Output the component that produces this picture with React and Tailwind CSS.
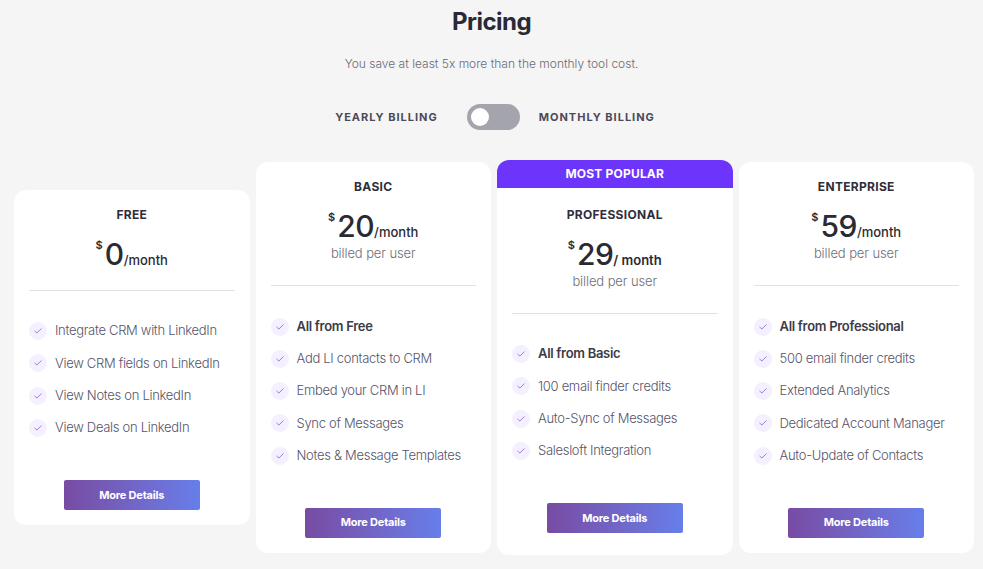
import React from "react";

const plans = [
  {
    name: "FREE",
    price: "0",
    per: "/month",
    billed: false,
    features: [
      ["Integrate CRM with LinkedIn", false],
      ["View CRM fields on LinkedIn", false],
      ["View Notes on LinkedIn", false],
      ["View Deals on LinkedIn", false],
    ],
  },
  {
    name: "BASIC",
    price: "20",
    per: "/month",
    billed: true,
    features: [
      ["All from Free", true],
      ["Add LI contacts to CRM", false],
      ["Embed your CRM in LI", false],
      ["Sync of Messages", false],
      ["Notes & Message Templates", false],
    ],
  },
  {
    name: "PROFESSIONAL",
    price: "29",
    per: "/ month",
    billed: true,
    popular: true,
    features: [
      ["All from Basic", true],
      ["100 email finder credits", false],
      ["Auto-Sync of Messages", false],
      ["Salesloft Integration", false],
    ],
  },
  {
    name: "ENTERPRISE",
    price: "59",
    per: "/month",
    billed: true,
    features: [
      ["All from Professional", true],
      ["500 email finder credits", false],
      ["Extended Analytics", false],
      ["Dedicated Account Manager", false],
      ["Auto-Update of Contacts", false],
    ],
  },
];

function Check() {
  return (
    <span className="flex h-[18px] w-[18px] shrink-0 items-center justify-center rounded-full bg-[#f4f0fe]">
      <svg width="8" height="6" viewBox="0 0 8 6" fill="none">
        <path d="M0.8 3.2 L2.9 5 L7.2 0.8" stroke="#9b7bf0" strokeWidth="1" strokeLinecap="round" strokeLinejoin="round" />
      </svg>
    </span>
  );
}

function Card({ plan }) {
  return (
    <div className="flex flex-col overflow-hidden rounded-[12px] bg-white">
      {plan.popular && (
        <div className="flex h-[28px] items-center justify-center bg-[#6d35fb] text-[12px] font-bold tracking-[0.2px] text-white">
          MOST POPULAR
        </div>
      )}
      <div className={`flex flex-col px-[15px] ${plan.popular ? "pt-[19px] pb-[22px]" : "pt-[17px] pb-[15px]"}`}>
        <div className="text-center text-[12px] font-bold leading-[16px] tracking-[0.3px] text-[#2f2e3a]">{plan.name}</div>
        <div className="mt-[13px] flex h-[36px] items-baseline justify-center text-[#2b2a33]">
          <span className="mr-[2px] self-start pt-[2px] text-[11px] font-semibold leading-[14px]">$</span>
          <span className="text-[30px] font-medium leading-[36px] tracking-[-0.5px]">{plan.price}</span>
          <span className={`text-[13px] ${plan.popular ? "font-semibold" : "font-medium"}`}>{plan.per}</span>
        </div>
        {plan.billed && (
          <div className="text-center text-[13px] font-light leading-[18px] tracking-[-0.1px] text-[#6f6e7a]">billed per user</div>
        )}
        <div className={`h-px bg-[#e2e2e6] ${plan.billed ? "mt-[23px]" : "mt-[18px]"}`} />
        <div className="mt-[24px] flex flex-col">
          {plan.features.map(([f, bold]) => (
            <div key={f} className="flex h-[32.25px] items-center gap-[8px]">
              <Check />
              <span className={`text-[13px] tracking-[-0.3px] ${bold ? "font-semibold text-[#3c3b47]" : "font-light text-[#55546a]"}`}>{f}</span>
            </div>
          ))}
        </div>
        <button className="mx-auto mt-[36px] flex h-[30px] w-[136px] items-center justify-center rounded-[2px] bg-gradient-to-r from-[#774ba3] to-[#667eea] text-[11px] font-bold tracking-[-0.2px] text-white">
          More Details
        </button>
      </div>
    </div>
  );
}

export default function App() {
  return (
    <div className="min-h-screen bg-[#f5f5f5] font-['Inter',sans-serif]">
      <h1 className="pt-[8px] text-center text-[24px] font-bold leading-[28px] tracking-[-0.5px] text-[#2a2935]">Pricing</h1>
      <p className="mt-[19px] text-center text-[12px] font-light leading-[18px] text-[#6b6a75]">
        You save at least 5x more than the monthly tool cost.
      </p>
      <div className="mt-[31px] flex items-center justify-center pl-[7px]">
        <span className="text-[11px] font-bold tracking-[1px] text-[#4b4a5a]">YEARLY BILLING</span>
        <div className="ml-[29px] mr-[19px] flex h-[26px] w-[53px] items-center rounded-full bg-[#a4a4ac] px-[4px]">
          <div className="h-[18px] w-[18px] rounded-full bg-white" />
        </div>
        <span className="text-[11px] font-bold tracking-[1px] text-[#4b4a5a]">MONTHLY BILLING</span>
      </div>
      <div className="mt-[30px] ml-[14px] grid w-[960px] grid-cols-4 items-center gap-[6px]">
        {plans.map((p) => (
          <Card key={p.name} plan={p} />
        ))}
      </div>
    </div>
  );
}
